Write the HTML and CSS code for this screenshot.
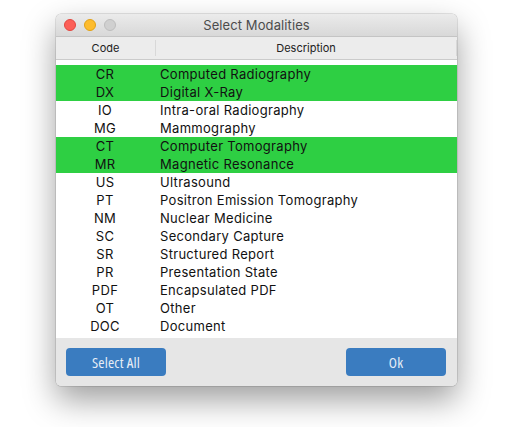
FILE: index.html
```html
<!DOCTYPE html>
<html>
<head>
<meta charset="utf-8">
<link rel="stylesheet" href="styles.css">
</head>
<body>
<div class="page">
  <div class="window">
    <div class="titlebar">
      <div class="lights">
        <span class="light red"></span>
        <span class="light yellow"></span>
        <span class="light grey"></span>
      </div>
      <div class="title">Select Modalities</div>
    </div>
    <div class="header">
      <div class="hcode">Code</div>
      <div class="hdesc">Description</div>
    </div>
    <div class="list">
      <div class="row sel"><span class="code">CR</span><span class="desc">Computed Radiography</span></div>
      <div class="row sel"><span class="code">DX</span><span class="desc">Digital X-Ray</span></div>
      <div class="row"><span class="code">IO</span><span class="desc">Intra-oral Radiography</span></div>
      <div class="row"><span class="code">MG</span><span class="desc">Mammography</span></div>
      <div class="row sel"><span class="code">CT</span><span class="desc">Computer Tomography</span></div>
      <div class="row sel"><span class="code">MR</span><span class="desc">Magnetic Resonance</span></div>
      <div class="row"><span class="code">US</span><span class="desc">Ultrasound</span></div>
      <div class="row"><span class="code">PT</span><span class="desc">Positron Emission Tomography</span></div>
      <div class="row"><span class="code">NM</span><span class="desc">Nuclear Medicine</span></div>
      <div class="row"><span class="code">SC</span><span class="desc">Secondary Capture</span></div>
      <div class="row"><span class="code">SR</span><span class="desc">Structured Report</span></div>
      <div class="row"><span class="code">PR</span><span class="desc">Presentation State</span></div>
      <div class="row"><span class="code">PDF</span><span class="desc">Encapsulated PDF</span></div>
      <div class="row"><span class="code">OT</span><span class="desc">Other</span></div>
      <div class="row"><span class="code">DOC</span><span class="desc">Document</span></div>
    </div>
    <div class="footer">
      <button class="btn">Select All</button>
      <button class="btn">Ok</button>
    </div>
  </div>
</div>
</body>
</html>
```
FILE: styles.css
```css
html, body {
  margin: 0;
  padding: 0;
  background: #ffffff;
}
.page {
  width: 510px;
  height: 427px;
  padding: 14px 0 0 56px;
  box-sizing: border-box;
}
.window {
  width: 401px;
  border-radius: 5px;
  overflow: hidden;
  background: #e6e6e6;
  box-shadow: 0 0 0 0.5px rgba(0,0,0,0.2), 0 14px 32px rgba(0,0,0,0.38);
  font-family: Inter, "Noto Sans", sans-serif;
}
.titlebar {
  height: 23px;
  position: relative;
  display: flex;
  align-items: center;
  justify-content: center;
  background: linear-gradient(#ebebeb, #d8d8d8);
  border-bottom: 1px solid #c4c4c4;
  box-sizing: border-box;
}
.lights {
  position: absolute;
  left: 8px;
  top: 5px;
  display: flex;
  gap: 8px;
}
.light {
  width: 12px;
  height: 12px;
  border-radius: 50%;
  box-sizing: border-box;
}
.red { background: #fc5f57; border: 0.5px solid #e2463f; }
.yellow { background: #fdbc2e; border: 0.5px solid #e1a116; }
.grey { background: #d0d0d0; border: 0.5px solid #bdbdbd; }
.title {
  font-size: 13px;
  color: #4c4c4c;
  letter-spacing: 0.1px;
}
.header {
  display: flex;
  height: 23px;
  background: #ececec;
  border-bottom: 1px solid #cbcbcb;
  box-sizing: border-box;
  font-size: 11px;
  color: #222;
}
.hcode {
  width: 99px;
  border-right: 1px solid #d8d8d8;
  margin: 3px 0;
  display: flex;
  align-items: center;
  justify-content: center;
}
.hdesc {
  flex: 1;
  display: flex;
  align-items: center;
  justify-content: center;
  border-right: 1px solid #d8d8d8;
  margin: 3px 0;
}
.list {
  background: #ffffff;
  padding: 5px 0 3px 0;
  font-size: 13px;
  color: #111;
  letter-spacing: 0.3px;
}
.row {
  display: flex;
  height: 18px;
  align-items: center;
}
.row.sel {
  background: #2ecf43;
}
.code {
  width: 98px;
  text-align: center;
}
.desc {
  padding-left: 6px;
}
.footer {
  display: flex;
  justify-content: space-between;
  padding: 10px 11px 10px 10px;
  background: #e6e6e6;
}
.btn {
  width: 100px;
  height: 28px;
  border: none;
  border-radius: 4px;
  background: #3a7cc0;
  color: #e6edf6;
  font-family: "Open Sans", sans-serif;
  font-size: 15px;
  font-stretch: condensed;
  letter-spacing: 0.2px;
  padding: 0;
}
```
